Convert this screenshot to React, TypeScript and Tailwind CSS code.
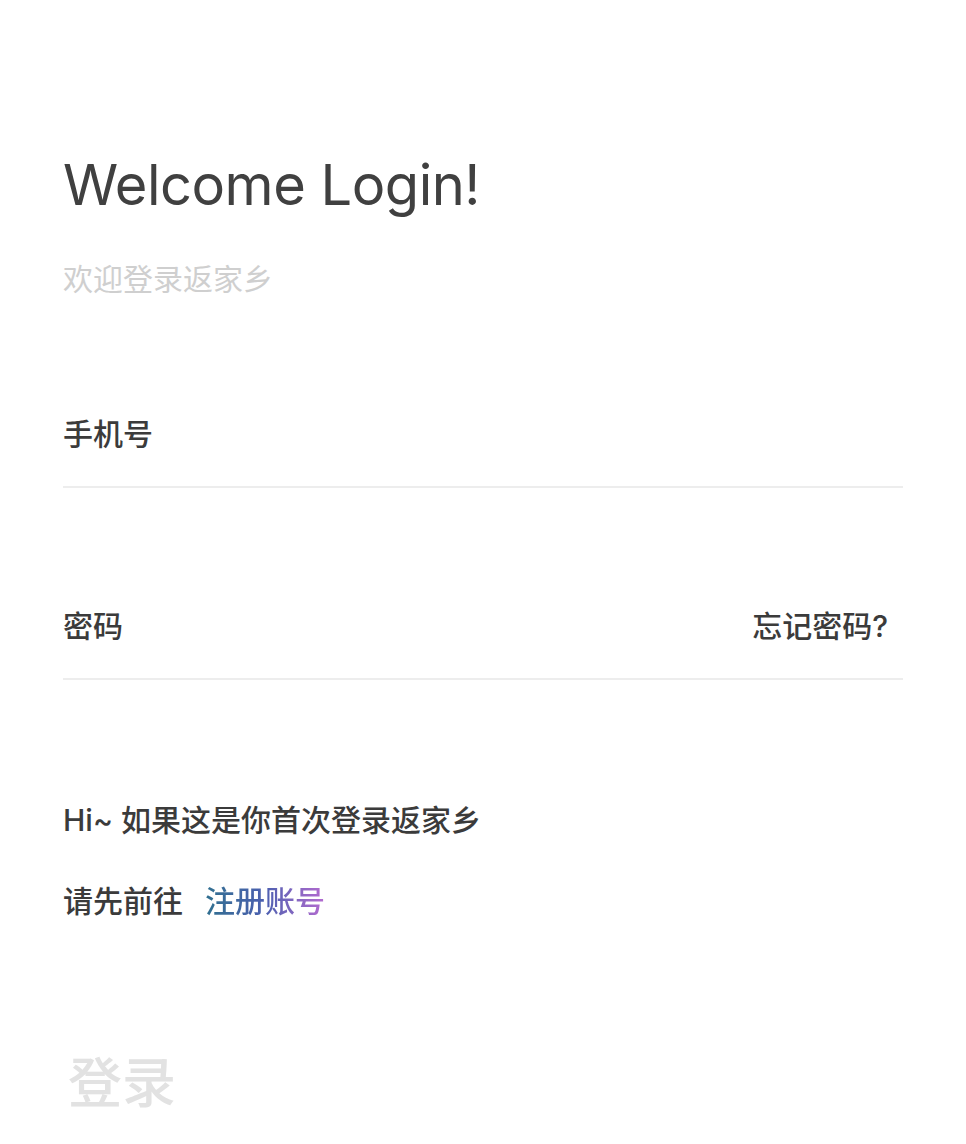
const cjk = "font-['Inter','Noto_Sans_CJK_SC',sans-serif]";

const Field = ({ label, right }: { label: string; right?: string }) => {
  return (
    <div className="flex items-center justify-between border-b-2 border-[#ededed] pb-[34px]">
      <span className="text-[30px] font-medium leading-[36px] text-[#3b3b3b]">{label}</span>
      {right && (
        <span className="mr-[15px] text-[30px] font-medium leading-[36px] text-[#3b3b3b]">{right}</span>
      )}
    </div>
  );
};

export default function App() {
  return (
    <div className={`min-h-[1144px] w-full bg-white px-[63px] pt-[150px] ${cjk}`}>
      <h1 className="text-[56px] font-normal leading-[70px] tracking-[-0.5px] text-[#404040]">
        Welcome Login!
      </h1>
      <p className="mt-[41px] text-[30px] leading-[36px] text-[#cfcfcf]">欢迎登录返家乡</p>

      <div className="mt-[119px] flex flex-col gap-[120px]">
        <Field label="手机号" />
        <Field label="密码" right="忘记密码?" />
      </div>

      <div className="mt-[122px] text-[30px] font-medium leading-[36px] text-[#3b3b3b]">
        <p>Hi~ 如果这是你首次登录返家乡</p>
        <p className="mt-[45px]">
          请先前往
          <span className="ml-[22px] bg-gradient-to-r from-[#2f6f8f] via-[#4b5fb0] to-[#b46ad0] bg-clip-text text-transparent">
            注册账号
          </span>
        </p>
      </div>

      <button className="mt-[135px] ml-[5px] block text-[54px] font-medium leading-[60px] text-[#e2e2e2]">登录</button>
    </div>
  );
}
